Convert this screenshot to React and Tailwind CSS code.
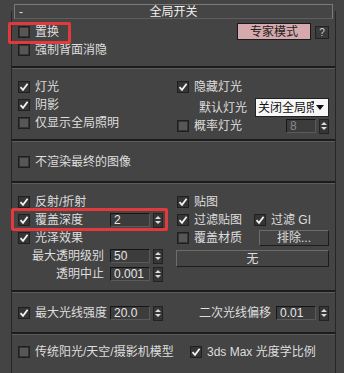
import React from 'react';

const font = { fontFamily: '"Liberation Sans", "Noto Sans CJK SC", sans-serif' };

const Check = ({ on }) => (
    <div className="w-[12px] h-[12px] shrink-0 border border-[#1f1f1f] bg-[#353535] flex items-center justify-center">
        {on ? (
            <svg width="10" height="10" viewBox="0 0 10 10">
                <path d="M1.5 5.2 L4 7.8 L8.6 1.8" stroke="#f2f2f2" strokeWidth="1.8" fill="none" />
            </svg>
        ) : (
            <div className="w-[8px] h-[8px] bg-[#575757]" />
        )}
    </div>
);

const Row = ({ on, label, className = '' }) => (
    <div className={`h-[18px] flex items-center gap-[5px] ${className}`}>
        <Check on={on} />
        <span className="whitespace-nowrap">{label}</span>
    </div>
);

const Arrows = () => (
    <div className="ml-[3px] w-[10px] h-[15px] bg-[#363636] border border-[#222] flex flex-col items-center justify-center gap-[2px]">
        <div className="w-0 h-0 border-l-[3px] border-r-[3px] border-b-[3px] border-l-transparent border-r-transparent border-b-[#dcdcdc]" />
        <div className="w-0 h-0 border-l-[3px] border-r-[3px] border-t-[3px] border-l-transparent border-r-transparent border-t-[#dcdcdc]" />
    </div>
);

const Spinner = ({ value, w, dim }) => (
    <div className="flex items-center">
        <div
            className={`h-[14px] ${w} bg-[#3c3c3c] border-t border-l border-[#161616] border-b border-r border-b-[#5a5a5a] border-r-[#5a5a5a] flex items-center px-[3px] text-[12px] leading-none ${dim ? 'text-[#8a8a8a]' : 'text-[#e6e6e6]'}`}
        >
            {value}
        </div>
        <Arrows />
    </div>
);

const Sep = () => <div className="h-[3px] border-t-2 border-[#1c1c1c] border-b border-b-[#5c5c5c]" />;

const Btn = ({ children, className = '' }) => (
    <div className={`flex items-center justify-center border-t border-l border-[#6c6c6c] border-b border-r border-b-[#1c1c1c] border-r-[#1c1c1c] ${className}`}>
        {children}
    </div>
);

export default function App() {
    return (
        <div className="w-[344px] h-[373px] bg-[#444444] text-[#dedede] text-[12px] overflow-hidden pt-[11px]" style={font}>
            <div className="flow-root ml-[11px] w-[325px] h-[362px] border-l border-r border-[#262626] relative">
                {/* rollout header */}
                <div className="-mt-[7px] mx-[2px] h-[15px] border border-[#7a7a7a] border-b-[#5e5e5e] bg-[#454545] relative flex items-center justify-center">
                    <span className="absolute left-[4px] top-[-2px]">-</span>
                    <span className="text-[#f0f0f0]">全局开关</span>
                </div>

                {/* section 1 */}
                <div className="h-[47px] flex">
                    <div className="w-[160px] pl-[6px] pt-[4px]">
                        <Row label="置换" />
                        <Row label="强制背面消隐" />
                    </div>
                    <div className="flex-1 pt-[4px] pr-[6px] flex justify-end items-start gap-[4px]">
                        <div className="w-[74px] h-[17px] bg-[#d6a9ac] border border-[#1a1a1a] text-[#222] flex items-center justify-center">专家模式</div>
                        <div className="mt-[3px] w-[14px] h-[13px] bg-[#3a3a3a] border border-[#222] text-[10px] text-[#cfcfcf] flex items-center justify-center">?</div>
                    </div>
                </div>
                <Sep />

                {/* section 2 */}
                <div className="h-[70px] flex pt-[9px]">
                    <div className="w-[160px] pl-[6px]">
                        <Row on label="灯光" />
                        <Row on label="阴影" />
                        <Row label="仅显示全局照明" />
                    </div>
                    <div className="flex-1 pl-[5px] pr-[6px]">
                        <Row on label="隐藏灯光" />
                        <div className="mt-[2px] h-[19px] flex items-center justify-end gap-[8px]">
                            <span>默认灯光</span>
                            <div className="w-[74px] h-[19px] bg-[#f7f7f7] border border-[#222] text-[#111] flex items-center overflow-hidden">
                                <span className="pl-[2px] whitespace-nowrap overflow-hidden w-[58px]">关闭全局照明</span>
                                <div className="ml-auto mr-[4px] w-0 h-0 border-l-[4px] border-r-[4px] border-t-[5px] border-l-transparent border-r-transparent border-t-[#111]" />
                            </div>
                        </div>
                        <div className="h-[18px] flex items-center justify-between">
                            <div className="flex items-center gap-[5px]">
                                <Check />
                                <span>概率灯光</span>
                            </div>
                            <Spinner value="8" w="w-[30px]" dim />
                        </div>
                    </div>
                </div>
                <Sep />

                {/* section 3 */}
                <div className="h-[39px] pt-[11px] pl-[6px]">
                    <Row label="不渲染最终的图像" />
                </div>
                <Sep />

                {/* section 4 */}
                <div className="h-[106px] flex pt-[9px]">
                    <div className="w-[160px] pl-[6px] pr-[9px]">
                        <Row on label="反射/折射" />
                        <div className="h-[18px] flex items-center justify-between">
                            <div className="flex items-center gap-[5px]">
                                <Check on />
                                <span>覆盖深度</span>
                            </div>
                            <Spinner value="2" w="w-[40px]" />
                        </div>
                        <Row on label="光泽效果" />
                        <div className="h-[18px] flex items-center justify-end gap-[6px]">
                            <span>最大透明级别</span>
                            <Spinner value="50" w="w-[40px]" />
                        </div>
                        <div className="h-[18px] flex items-center justify-end gap-[6px]">
                            <span>透明中止</span>
                            <Spinner value="0.001" w="w-[40px]" />
                        </div>
                    </div>
                    <div className="flex-1 pl-[5px] pr-[6px]">
                        <Row on label="贴图" />
                        <div className="h-[18px] flex items-center">
                            <div className="w-[77px] flex items-center gap-[5px]">
                                <Check on />
                                <span>过滤贴图</span>
                            </div>
                            <div className="flex items-center gap-[5px]">
                                <Check on />
                                <span>过滤 GI</span>
                            </div>
                        </div>
                        <div className="h-[18px] flex items-center justify-between">
                            <div className="flex items-center gap-[5px]">
                                <Check />
                                <span>覆盖材质</span>
                            </div>
                            <Btn className="w-[70px] h-[16px]">排除...</Btn>
                        </div>
                        <Btn className="mt-[3px] ml-[-1px] h-[17px]">无</Btn>
                    </div>
                </div>
                <Sep />

                {/* section 5 */}
                <div className="h-[39px] flex pt-[11px]">
                    <div className="w-[160px] pl-[6px] pr-[9px]">
                        <div className="h-[18px] flex items-center justify-between">
                            <div className="flex items-center gap-[5px]">
                                <Check on />
                                <span>最大光线强度</span>
                            </div>
                            <Spinner value="20.0" w="w-[40px]" />
                        </div>
                    </div>
                    <div className="flex-1 pr-[6px]">
                        <div className="h-[18px] flex items-center justify-end gap-[5px]">
                            <span>二次光线偏移</span>
                            <Spinner value="0.01" w="w-[40px]" />
                        </div>
                    </div>
                </div>
                <Sep />

                {/* section 6 */}
                <div className="h-[38px] flex pt-[8px]">
                    <div className="w-[178px] pl-[6px]">
                        <Row label="传统阳光/天空/摄影机模型" />
                    </div>
                    <div className="flex-1">
                        <Row on label="3ds Max 光度学比例" />
                    </div>
                </div>

                {/* annotation highlights */}
                <div className="absolute left-[-4px] top-[11px] w-[63px] h-[22px] border-[3px] border-[#e23a3c] rounded-[2px]" />
                <div className="absolute left-[-1px] top-[197px] w-[157px] h-[23px] border-[3px] border-[#e23a3c] rounded-[2px]" />
            </div>
        </div>
    );
}
